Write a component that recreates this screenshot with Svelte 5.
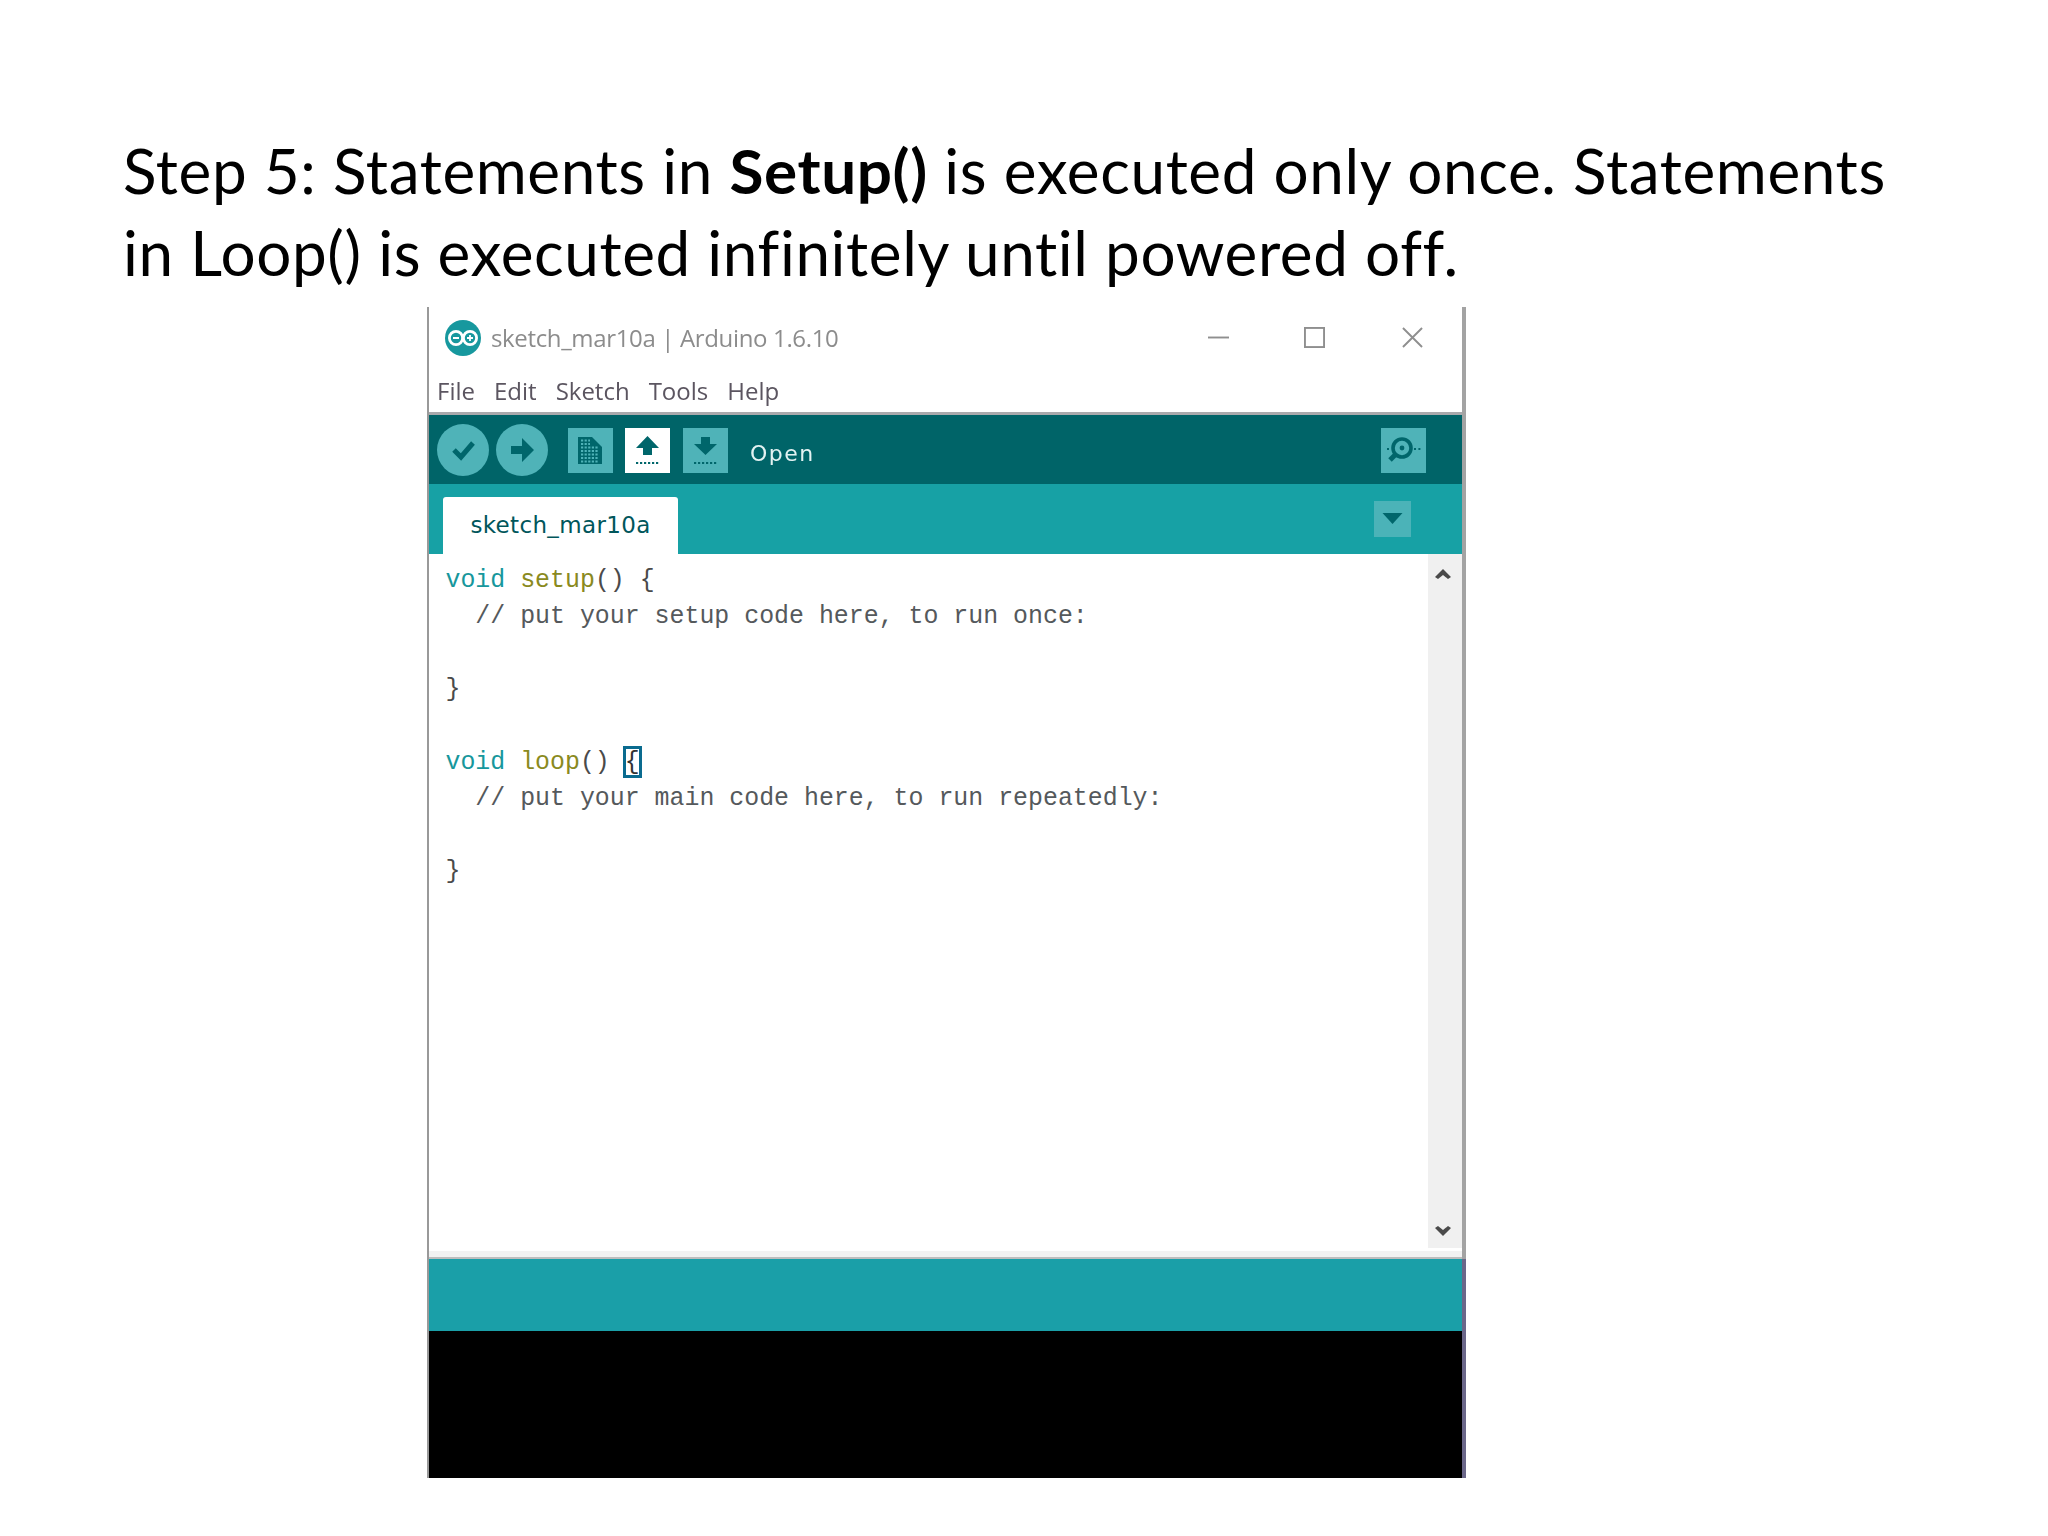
<script>
  const menus = ['File', 'Edit', 'Sketch', 'Tools', 'Help'];
</script>

<div class="page">
  <h1>Step 5: Statements in <b>Setup()</b> is executed only once. Statements<br />in Loop() is executed infinitely until powered off.</h1>

  <div class="window">
    <div class="upper">
      <div class="titlebar">
        <svg class="logo" viewBox="0 0 36 36">
          <circle cx="18" cy="18" r="18" fill="#17989e" />
          <g fill="none" stroke="#fff" stroke-width="2.8">
            <circle cx="11" cy="18" r="6.6" />
            <circle cx="25" cy="18" r="6.6" />
          </g>
          <path d="M8 18h6M22 18h6M25 15v6" stroke="#fff" stroke-width="1.8" />
        </svg>
        <span class="title">sketch_mar10a | Arduino 1.6.10</span>
        <div class="controls">
          <svg viewBox="0 0 22 22"><path d="M0 11h22" /></svg>
          <svg viewBox="0 0 22 22"><rect x="1" y="1" width="20" height="20" /></svg>
          <svg class="close" viewBox="0 0 22 22"><path d="M1 1l20 20M21 1L1 21" /></svg>
        </div>
      </div>

      <nav class="menubar">
        {#each menus as m}<span>{m}</span>{/each}
      </nav>

      <div class="toolbar">
        <button class="round" aria-label="Verify">
          <svg viewBox="0 0 52 52"><path d="M17 26l7 7 12-14" fill="none" stroke="#00666b" stroke-width="5" /></svg>
        </button>
        <button class="round second" aria-label="Upload">
          <svg viewBox="0 0 52 52"><path d="M15 22h11v-8l12 12-12 12v-8H15z" fill="#00666b" /></svg>
        </button>
        <button class="square first" aria-label="New">
          <svg viewBox="0 0 45 45">
            <path d="M10 9h14l10 10v17H10z" fill="#00666b" />
            <path d="M13 12.5h9M13 16h9M13 19.5h18M13 23h18M13 26.5h18M13 30h18M13 33.5h18" stroke="#4fb3b8" stroke-width="2" stroke-dasharray="2.2 1.4" />
          </svg>
        </button>
        <button class="square active" aria-label="Open">
          <svg viewBox="0 0 45 45">
            <path d="M22.5 8L34 20H27V27H18V20H11z" fill="#00666b" />
            <path d="M11 35h24" stroke="#00666b" stroke-width="1.8" stroke-dasharray="2.2 1.8" />
          </svg>
        </button>
        <button class="square save" aria-label="Save">
          <svg viewBox="0 0 45 45">
            <path d="M18 9h9v7h7L22.5 27 11 16h7z" fill="#00666b" />
            <path d="M11 35h24" stroke="#00666b" stroke-width="1.8" stroke-dasharray="2.2 1.8" />
          </svg>
        </button>
        <span class="status">Open</span>
        <button class="square serial" aria-label="Serial monitor">
          <svg viewBox="0 0 45 45">
            <circle cx="21" cy="20" r="9" fill="none" stroke="#00666b" stroke-width="3.6" />
            <circle cx="21" cy="20" r="2.4" fill="#00666b" />
            <path d="M14 27l-5 5" stroke="#00666b" stroke-width="5" />
            <path d="M33 21h7M6 21h3" stroke="#00666b" stroke-width="1.8" stroke-dasharray="2 2.4" />
          </svg>
        </button>
      </div>

      <div class="tabs">
        <div class="tab">sketch_mar10a</div>
        <button class="tabmenu" aria-label="Tab menu">
          <svg viewBox="0 0 20 12"><path d="M0 0h20L10 11z" fill="#00666b" /></svg>
        </button>
      </div>

      <div class="editor">
        <div class="editor-main">
          <div class="code">
            <div><span class="kw">void</span> <span class="fn">setup</span>() &#123;</div>
            <div class="cm">// put your setup code here, to run once:</div>
            <div class="blank"></div>
            <div>&#125;</div>
            <div class="blank"></div>
            <div><span class="kw">void</span> <span class="fn">loop</span>() <span class="caret">&#123;</span></div>
            <div class="cm">// put your main code here, to run repeatedly:</div>
            <div class="blank"></div>
            <div>&#125;</div>
          </div>
          <div class="scrollbar">
            <svg viewBox="0 0 16 12"><path d="M0 9l8-8 8 8-3 2-5-4-5 4z" fill="#4a4a4a" /></svg>
            <svg viewBox="0 0 16 12"><path d="M0 3l8 8 8-8-3-2-5 4-5-4z" fill="#4a4a4a" /></svg>
          </div>
        </div>
        <div class="hscroll"></div>
      </div>
    </div>

    <div class="lower">
      <div class="statusbar"></div>
      <div class="console"></div>
    </div>
  </div>
</div>

<style>
  :global(body) {
    margin: 0;
    background: #fff;
  }

  .page {
    width: 2048px;
    height: 1536px;
    overflow: hidden;
    background: #fff;
  }

  h1 {
    margin: 0;
    padding: 129px 0 0 123px;
    height: 178px;
    font-family: Lato, "Open Sans", sans-serif;
    font-weight: 400;
    font-size: 62px;
    letter-spacing: 0.62px;
    font-variant-ligatures: none;
    line-height: 82px;
    color: #000;
    white-space: nowrap;
  }

  .window {
    margin-left: 427px;
    width: 1039px;
    height: 1171px;
    display: flex;
    flex-direction: column;
    border-left: 2px solid #999;
    box-sizing: border-box;
    font-family: "Open Sans", sans-serif;
    filter: blur(0.5px);
  }

  .upper {
    height: 952px;
    display: flex;
    flex-direction: column;
    border-right: 4px solid #a3a3a3;
  }

  .lower {
    flex: 1;
    display: flex;
    flex-direction: column;
    border-right: 4px solid #6b6789;
  }

  .titlebar {
    height: 61px;
    display: flex;
    align-items: center;
    padding-left: 16px;
    flex-shrink: 0;
  }

  .logo {
    width: 36px;
    height: 36px;
    margin-top: 1px;
  }

  .title {
    margin-left: 10px;
    font-size: 24px;
    color: #8c8c8c;
    letter-spacing: -0.35px;
  }

  .controls {
    margin-left: auto;
    display: flex;
    gap: 75px;
    padding-right: 39px;
  }

  .controls svg {
    width: 21px;
    height: 21px;
    display: block;
  }

  .controls .close {
    margin-left: 2px;
  }

  .controls path,
  .controls rect {
    fill: none;
    stroke: #8f8f8f;
    stroke-width: 2;
  }

  .menubar {
    height: 44px;
    display: flex;
    gap: 19px;
    align-items: center;
    padding-left: 8px;
    font-size: 24px;
    color: #5b5560;
    border-bottom: 3px solid #a9a9ac;
    flex-shrink: 0;
  }

  .toolbar {
    height: 69px;
    background: #006468;
    display: flex;
    align-items: center;
    padding-left: 8px;
    flex-shrink: 0;
  }

  button {
    border: 0;
    padding: 0;
    background: #4fb3b8;
    display: block;
  }

  button svg {
    display: block;
    width: 100%;
    height: 100%;
  }

  .round {
    width: 52px;
    height: 52px;
    border-radius: 50%;
    margin-top: 1px;
  }

  .round.second {
    margin-left: 7px;
  }

  .square {
    width: 45px;
    height: 45px;
    margin-left: 12px;
    margin-top: 1px;
  }

  .square.first {
    margin-left: 20px;
  }

  .square.save {
    margin-left: 13px;
  }

  .square.active {
    background: #fff;
  }

  .status {
    margin-left: 22px;
    font-family: "DejaVu Sans", sans-serif;
    font-size: 22px;
    letter-spacing: 1.5px;
    color: #e3f2f2;
    margin-top: 7px;
  }

  .square.serial {
    margin-left: auto;
    margin-right: 36px;
  }

  .tabs {
    height: 70px;
    background: #17a1a5;
    display: flex;
    align-items: flex-end;
    padding-left: 14px;
    flex-shrink: 0;
  }

  .tab {
    width: 235px;
    height: 57px;
    padding-bottom: 2px;
    box-sizing: border-box;
    background: #fff;
    border-radius: 3px 3px 0 0;
    display: flex;
    align-items: center;
    justify-content: center;
    font-family: "DejaVu Sans", sans-serif;
    font-size: 23px;
    letter-spacing: 0.35px;
    color: #00565b;
  }

  .tabmenu {
    width: 37px;
    height: 36px;
    margin-left: auto;
    margin-right: 51px;
    margin-bottom: 17px;
    padding: 12px 8px;
    box-sizing: border-box;
    background: #4bb3b8;
  }

  .editor {
    flex: 1;
    min-height: 0;
    display: flex;
    flex-direction: column;
    background: #fff;
    border-bottom: 2px solid #bdbdbd;
  }

  .editor-main {
    flex: 1;
    min-height: 0;
    display: flex;
  }

  .hscroll {
    height: 6px;
    background: #f2f2f2;
  }

  .code {
    flex: 1;
    padding: 8px 0 0 16.5px;
    font-family: "Liberation Mono", monospace;
    font-size: 24.9px;
    line-height: 36.4px;
    color: #4a4a4a;
  }

  .blank {
    height: 36.4px;
  }

  .kw {
    color: #17979c;
  }

  .fn {
    color: #8a8a1e;
  }

  .cm {
    color: #55595c;
    margin-left: 2ch;
  }

  .caret {
    outline: 3px solid #0a6b8f;
    outline-offset: -1px;
    color: #333;
  }

  .scrollbar {
    width: 34px;
    background: #f0f0f0;
    display: flex;
    flex-direction: column;
    justify-content: space-between;
    align-items: center;
    padding: 14px 4px 11px 0;
    margin-bottom: 3px;
    box-sizing: border-box;
  }

  .scrollbar svg {
    width: 16px;
    height: 12px;
  }

  .statusbar {
    height: 72px;
    background: #1a9fa8;
  }

  .console {
    flex: 1;
    background: #000;
  }
</style>
